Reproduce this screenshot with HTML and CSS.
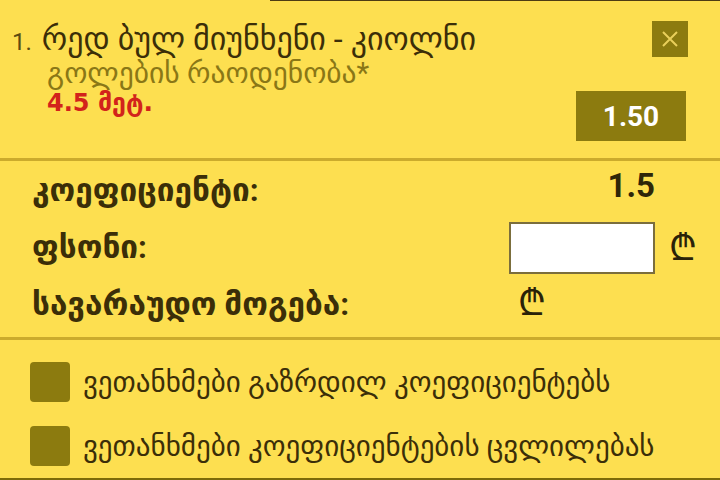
FILE: index.html
```html
<!DOCTYPE html>
<html lang="ka">
<head>
    <meta charset="UTF-8">
    <meta name="viewport" content="width=device-width, initial-scale=1.0">
    <title>ბილეთი</title>
    <link rel="stylesheet" href="styles.css">
</head>
<body>
    <div class="top-line"></div>

    <div class="bet">
        <div class="bet-info">
            <div class="bet-title">
                <span class="bet-num">1.</span>
                <span class="ka">რედ ბულ მიუნხენი - კიოლნი</span>
            </div>
            <div class="bet-market">გოლების რაოდენობა*</div>
            <div class="bet-pick">4.5 <span class="ka">მეტ.</span></div>
        </div>
        <div class="bet-side">
            <button class="close-btn" type="button">
                <svg width="20" height="20" viewBox="0 0 20 20">
                    <path d="M3 3 L17 17 M17 3 L3 17" stroke="#e9cf5a" stroke-width="2" fill="none"/>
                </svg>
            </button>
            <div class="odds-box">1.50</div>
        </div>
    </div>

    <div class="stake">
        <div class="stake-label">კოეფიციენტი:</div>
        <div class="stake-odds">1.5</div>
        <div></div>

        <label class="stake-label" for="amount">ფსონი:</label>
        <input class="stake-input" type="text" id="amount">
        <div class="lari">₾</div>

        <div class="stake-label">სავარაუდო მოგება:</div>
        <div class="lari lari-win">₾</div>
        <div></div>
    </div>

    <div class="agree">
        <label class="agree-row">
            <span class="check"></span>
            <span>ვეთანხმები გაზრდილ კოეფიციენტებს</span>
        </label>
        <label class="agree-row">
            <span class="check"></span>
            <span>ვეთანხმები კოეფიციენტების ცვლილებას</span>
        </label>
    </div>
</body>
</html>
```

FILE: styles.css
```css
body {
    margin: 0;
    background: #fddf50;
    font-family: Roboto, "DejaVu Sans", "Noto Sans", sans-serif;
    color: #3b2e08;
    width: 720px;
    height: 480px;
    overflow: hidden;
}
.top-line {
    height: 1px;
    margin-left: 270px;
    background: #4d3c12;
}
.bet {
    display: flex;
    justify-content: space-between;
    padding: 0 32px 0 12px;
    border-bottom: 3px solid #cbab2c;
    box-sizing: border-box;
    height: 160px;
}
.bet-info {
    padding-top: 22px;
}
.bet-title {
    display: flex;
    align-items: baseline;
    gap: 10px;
    font-size: 24px;
    line-height: 32px;
}
.bet-title .ka {
    font-size: 32px;
}
.bet-num {
    color: #5c4c12;
}
.bet-market {
    margin-left: 35px;
    font-size: 29.5px;
    line-height: 31px;
    color: #8a7716;
}
.bet-pick {
    margin-left: 35px;
    font-family: "DejaVu Sans", sans-serif;
    font-size: 24px;
    line-height: 28px;
    font-weight: bold;
    color: #d2231b;
}
.bet-pick .ka {
    font-size: 25px;
}
.bet-side {
    display: flex;
    flex-direction: column;
    align-items: flex-end;
    padding-top: 20px;
}
.close-btn {
    width: 36px;
    height: 36px;
    padding: 0;
    border: none;
    background: #8c7b0f;
    display: flex;
    align-items: center;
    justify-content: center;
}
.odds-box {
    margin-top: 34px;
    margin-right: 2px;
    width: 110px;
    height: 50px;
    background: #8c7b0f;
    color: #fff;
    font-size: 28px;
    font-weight: bold;
    display: flex;
    align-items: center;
    justify-content: center;
}
.stake {
    display: grid;
    grid-template-columns: 1fr 146px 50px;
    grid-auto-rows: 57px;
    align-items: center;
    padding: 1px 15px 4px 32px;
    border-bottom: 3px solid #cbab2c;
}
.stake-label {
    font-size: 31.5px;
    font-weight: bold;
    color: #3b2e08;
}
.stake-odds {
    text-align: right;
    font-size: 33px;
    font-weight: bold;
    color: #2f2608;
    margin-top: -10px;
}
.stake-input {
    width: 146px;
    height: 52px;
    box-sizing: border-box;
    border: 2px solid #7b6e3c;
    background: #fff;
    margin: 0;
}
.lari {
    font-size: 36px;
    line-height: 40px;
    color: #2a2208;
    padding-left: 14px;
}
.lari-win {
    padding-left: 9px;
    margin-top: -4px;
}
.agree {
    display: flex;
    flex-direction: column;
    gap: 24px;
    padding: 22px 0 12px 30px;
    border-bottom: 2px solid #7d6b08;
}
.agree-row {
    display: flex;
    align-items: center;
    gap: 13px;
    font-size: 29px;
    color: #3b2e08;
}
.check {
    width: 40px;
    height: 40px;
    border-radius: 4px;
    background: #8c7b0f;
}
```
